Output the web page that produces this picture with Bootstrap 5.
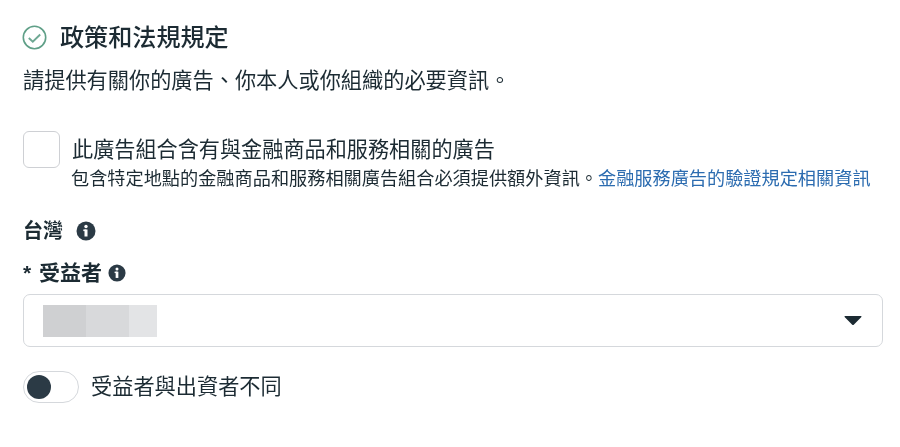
<!DOCTYPE html>
<html lang="zh-Hant">
<head>
<meta charset="utf-8">
<title>政策和法規規定</title>
<link href="https://cdn.jsdelivr.net/npm/bootstrap@5.3.0/dist/css/bootstrap.min.css" rel="stylesheet">
<style>
html,body{height:447px;overflow:hidden;background:#fff}
body{font-family:"Liberation Sans","Noto Sans CJK TC",sans-serif;color:#1c2b33;padding:22px 17px 0 23px;filter:blur(.45px)}
.hd-row{height:31px;gap:13px}
.hd-ic{margin-left:-1px}
.hd-text{font-size:24.1px;line-height:31px;font-weight:500;color:#1c2b33;margin:0}
.intro{font-size:21.2px;line-height:30px;margin:13px 0 0;color:#1c2b33}
.chk-row{margin-top:35px;gap:12px}
.chk-box{width:37px;height:37px;border:1px solid #ced0d4;border-radius:6px;background:#fff;flex:none}
.chk-main{font-size:21.15px;line-height:30px;margin-top:4px}
.chk-sub{font-size:18.18px;line-height:24px;margin-top:2px;margin-left:-1px;white-space:nowrap;color:#1c2b33}
.chk-sub a{color:#2c6cb0;text-decoration:none}
.lbl-a{font-size:20px;line-height:28px;font-weight:700;margin-top:26px;gap:13px}
.lbl-b{font-size:21px;line-height:28px;font-weight:700;margin-top:14px;gap:6px}
.star-mk{margin-right:2px}
.sel-box{height:53px;border:1px solid #d5d8dc;border-radius:7px;margin-top:7px;padding:0 20px 0 19px;background:#fff}
.blur-blk{height:32px}
.b1{width:43px;background:#cfd0d2}
.b2{width:43px;background:#d8d9db}
.b3{width:28px;background:#e3e4e6}
.caret-ic{width:18px;height:11px}
.tg-row{margin-top:24px;gap:12px}
.tg-track{width:56px;height:32px;border:1px solid #d5d8dc;border-radius:16px;padding:3px;background:#fff}
.tg-knob{width:24px;height:24px;border-radius:50%;background:#2b3a45}
.tg-text{font-size:21.2px;line-height:32px}
</style>
</head>
<body>
<div class="d-flex align-items-center hd-row">
  <svg class="hd-ic" width="25" height="25" viewBox="0 0 25 25" fill="none"><circle cx="12.5" cy="12.5" r="11.2" stroke="#5f9f87" stroke-width="1.6"/><path d="M6.8 13l4 3.7 7.4-7.2" stroke="#6ea893" stroke-width="1.9"/></svg>
  <h1 class="hd-text">政策和法規規定</h1>
</div>
<p class="intro">請提供有關你的廣告、你本人或你組織的必要資訊。</p>
<div class="d-flex chk-row">
  <div class="chk-box"></div>
  <div>
    <div class="chk-main">此廣告組合含有與金融商品和服務相關的廣告</div>
    <div class="chk-sub">包含特定地點的金融商品和服務相關廣告組合必須提供額外資訊。<a href="#">金融服務廣告的驗證規定相關資訊</a></div>
  </div>
</div>
<div class="d-flex align-items-center lbl-a">
  <span>台灣</span>
  <svg width="20" height="20" viewBox="0 0 20 20"><circle cx="10" cy="10" r="9.5" fill="#2b3a45"/><rect x="8.5" y="8.5" width="3" height="7" fill="#fff"/><rect x="7.3" y="8.5" width="3" height="1.6" fill="#fff"/><circle cx="10" cy="5.5" r="1.7" fill="#fff"/></svg>
</div>
<div class="d-flex align-items-center lbl-b">
  <span><span class="star-mk">*</span> 受益者</span>
  <svg width="18" height="18" viewBox="0 0 20 20"><circle cx="10" cy="10" r="9.5" fill="#2b3a45"/><rect x="8.5" y="8.5" width="3" height="7" fill="#fff"/><rect x="7.3" y="8.5" width="3" height="1.6" fill="#fff"/><circle cx="10" cy="5.5" r="1.7" fill="#fff"/></svg>
</div>
<div class="d-flex align-items-center justify-content-between sel-box">
  <div class="d-flex">
    <div class="blur-blk b1"></div><div class="blur-blk b2"></div><div class="blur-blk b3"></div>
  </div>
  <svg class="caret-ic" viewBox="0 0 18 11"><path d="M1 1h16a.6.6 0 0 1 .4 1L10 9.6a1.4 1.4 0 0 1-2 0L.6 2A.6.6 0 0 1 1 1z" fill="#1c2b33"/></svg>
</div>
<div class="d-flex align-items-center tg-row">
  <div class="tg-track"><div class="tg-knob"></div></div>
  <span class="tg-text">受益者與出資者不同</span>
</div>
<script src="https://cdn.jsdelivr.net/npm/bootstrap@5.3.0/dist/js/bootstrap.bundle.min.js"></script>
</body>
</html>
